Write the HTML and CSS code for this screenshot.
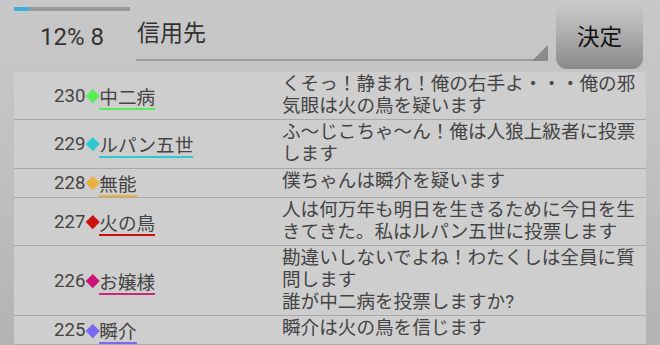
FILE: index.html
```html
<!DOCTYPE html>
<html lang="ja">
<head>
<meta charset="utf-8">
<link rel="stylesheet" href="styles.css">
</head>
<body>
<div class="app">
  <div class="topbar">
    <div class="status">
      <div class="progress"><div class="progress-fill" style="width:13%"></div></div>
      <div class="pct">12% 8</div>
    </div>
    <div class="spinner">
      <span class="spinner-text">信用先</span>
      <span class="spinner-arrow"></span>
    </div>
    <div class="btn">決定</div>
  </div>
  <div class="list">
    <div class="row">
      <div class="who"><span class="num">230</span><span class="dia c-green"></span><span class="name u-green">中二病</span></div>
      <div class="msg">くそっ！静まれ！俺の右手よ・・・俺の邪気眼は火の鳥を疑います</div>
    </div>
    <div class="row">
      <div class="who"><span class="num">229</span><span class="dia c-cyan"></span><span class="name u-cyan">ルパン五世</span></div>
      <div class="msg">ふ～じこちゃ～ん！俺は人狼上級者に投票します</div>
    </div>
    <div class="row">
      <div class="who"><span class="num">228</span><span class="dia c-gold"></span><span class="name u-gold">無能</span></div>
      <div class="msg">僕ちゃんは瞬介を疑います</div>
    </div>
    <div class="row">
      <div class="who"><span class="num">227</span><span class="dia c-red"></span><span class="name u-red">火の鳥</span></div>
      <div class="msg">人は何万年も明日を生きるために今日を生きてきた。私はルパン五世に投票します</div>
    </div>
    <div class="row">
      <div class="who"><span class="num">226</span><span class="dia c-pink"></span><span class="name u-pink">お嬢様</span></div>
      <div class="msg">勘違いしないでよね！わたくしは全員に質問します<br>誰が中二病を投票しますか?</div>
    </div>
    <div class="row">
      <div class="who"><span class="num">225</span><span class="dia c-violet"></span><span class="name u-violet">瞬介</span></div>
      <div class="msg">瞬介は火の鳥を信じます</div>
    </div>
  </div>
</div>
</body>
</html>
```
FILE: styles.css
```css
html, body {
  margin: 0;
  padding: 0;
}
body {
  width: 660px;
  height: 345px;
  overflow: hidden;
  background: linear-gradient(to bottom, #c8c8c8 0%, #c2c2c2 40%, #b3b3b3 100%);
  font-family: Roboto, "Noto Sans CJK JP", sans-serif;
  color: #444;
}
.app {
  height: 345px;
  display: flex;
  flex-direction: column;
  padding: 0 14px;
}
.topbar {
  height: 72px;
  flex: none;
  display: flex;
}
.status {
  width: 116px;
  flex: none;
  padding-top: 7px;
}
.progress {
  height: 4px;
  background: #999;
}
.progress-fill {
  height: 100%;
  background: #3aaee0;
}
.pct {
  margin-top: 12px;
  text-align: center;
  font-size: 24px;
  line-height: 28px;
  color: #333;
}
.spinner {
  position: relative;
  margin-left: 6px;
  width: 412px;
  height: 59px;
  border-bottom: 2px solid #9c9c9c;
  box-sizing: content-box;
}
.spinner-text {
  display: block;
  padding-top: 14px;
  padding-left: 1px;
  font-family: "Noto Sans CJK JP", sans-serif;
  font-size: 23px;
  color: #333;
}
.spinner-arrow {
  position: absolute;
  right: 0;
  bottom: -2px;
  width: 0;
  height: 0;
  border-left: 16px solid transparent;
  border-bottom: 16px solid #8a8a8a;
}
.btn {
  margin-left: 8px;
  margin-top: 1px;
  width: 87px;
  height: 68px;
  border-radius: 11px;
  background: linear-gradient(to bottom, #cbcbcb 0%, #b0b0b0 45%, #8a8a8a 100%);
  display: flex;
  align-items: center;
  justify-content: center;
  font-family: "Noto Sans CJK JP", sans-serif;
  font-size: 22.5px;
  color: #111;
}
.list {
  flex: 1;
  width: 632px;
  background: #cecece;
}
.row {
  display: grid;
  grid-template-columns: 268px 1fr;
  border-bottom: 1px solid #a9a9a9;
}
.who {
  display: flex;
  align-items: center;
  padding-left: 40px;
  font-size: 18.6px;
}
.num {
  line-height: 22px;
}
.dia {
  width: 9.5px;
  height: 9.5px;
  margin: 0 2px 0 2.5px;
  transform: rotate(45deg);
  flex: none;
}
.name {
  font-family: "Noto Sans CJK JP", sans-serif;
  line-height: 22px;
  padding-top: 3px;
  padding-bottom: 1px;
  border-bottom: 2px solid;
}
.msg {
  padding: 2px 0;
  font-size: 18.6px;
  line-height: 21.7px;
}
.c-green { background: #58ec58; }
.c-cyan { background: #30c8d0; }
.c-gold { background: #e8b03c; }
.c-red { background: #cc1010; }
.c-pink { background: #cc1478; }
.c-violet { background: #7a68f0; }
.u-green { border-color: #58ec58; }
.u-cyan { border-color: #30c8d0; }
.u-gold { border-color: #e8b03c; }
.u-red { border-color: #cc1010; }
.u-pink { border-color: #c8287a; }
.u-violet { border-color: #7a68f0; }
```
